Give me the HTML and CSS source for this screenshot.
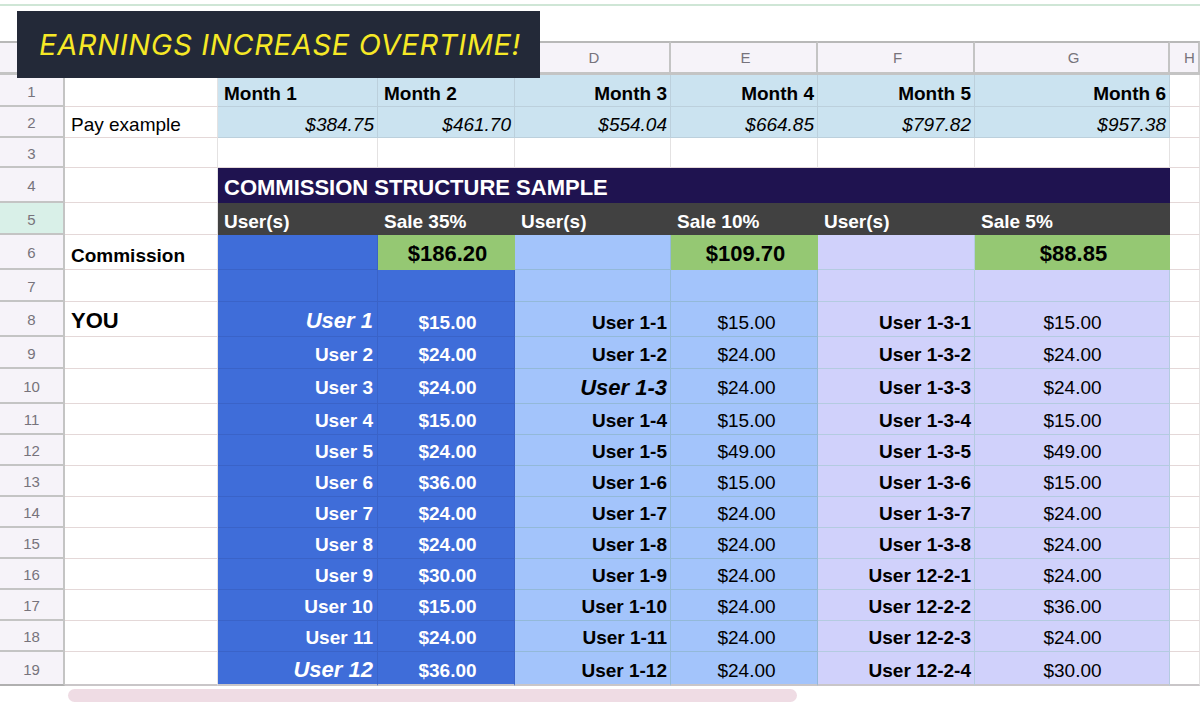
FILE: index.html
```html
<!DOCTYPE html>
<html lang="en">
<head>
<meta charset="utf-8">
<title>Earnings increase overtime</title>
<link rel="stylesheet" href="styles.css">
</head>
<body>
<div class="page">
  <div class="topstrip"></div>
  <div class="banner">EARNINGS INCREASE OVERTIME!</div>
  <table class="sheet">
    <colgroup>
      <col class="c-rh"><col class="c-a"><col class="c-b"><col class="c-c"><col class="c-d"><col class="c-e"><col class="c-f"><col class="c-g"><col class="c-h">
    </colgroup>
    <tr class="h34 colhead"><th class="rh"></th><th></th><th></th><th></th><th>D</th><th>E</th><th>F</th><th>G</th><th class="hcol">H</th></tr>
    <tr class="h32 low"><th class="rh">1</th><td></td><td class="pale b">Month 1</td><td class="pale b">Month 2</td><td class="pale b r">Month 3</td><td class="pale b r">Month 4</td><td class="pale b r">Month 5</td><td class="pale b r">Month 6</td><td></td></tr>
    <tr class="h31 low"><th class="rh">2</th><td>Pay example</td><td class="pale r i">$384.75</td><td class="pale r i">$461.70</td><td class="pale r i">$554.04</td><td class="pale r i">$664.85</td><td class="pale r i">$797.82</td><td class="pale r i">$957.38</td><td></td></tr>
    <tr class="h30"><th class="rh">3</th><td></td><td></td><td></td><td></td><td></td><td></td><td></td><td></td></tr>
    <tr class="h35"><th class="rh">4</th><td></td><td class="navy" colspan="6">COMMISSION STRUCTURE SAMPLE</td><td></td></tr>
    <tr class="h32"><th class="rh sel">5</th><td></td><td class="grey">User(s)</td><td class="grey">Sale 35%</td><td class="grey">User(s)</td><td class="grey">Sale 10%</td><td class="grey">User(s)</td><td class="grey">Sale 5%</td><td></td></tr>
    <tr class="h35"><th class="rh">6</th><td class="b label">Commission</td><td class="blue"></td><td class="green">$186.20</td><td class="sky"></td><td class="green">$109.70</td><td class="lav"></td><td class="green">$88.85</td><td></td></tr>
    <tr class="h32"><th class="rh">7</th><td></td><td class="blue"></td><td class="blue"></td><td class="sky"></td><td class="sky"></td><td class="lav"></td><td class="lav"></td><td></td></tr>
    <tr class="h35 low2"><th class="rh">8</th><td class="you">YOU</td><td class="blue u big">User 1</td><td class="blue amt">$15.00</td><td class="sky u">User 1-1</td><td class="sky m">$15.00</td><td class="lav u">User 1-3-1</td><td class="lav m">$15.00</td><td></td></tr>
    <tr class="h32"><th class="rh">9</th><td></td><td class="blue u">User 2</td><td class="blue amt">$24.00</td><td class="sky u">User 1-2</td><td class="sky m">$24.00</td><td class="lav u">User 1-3-2</td><td class="lav m">$24.00</td><td></td></tr>
    <tr class="h35"><th class="rh">10</th><td></td><td class="blue u">User 3</td><td class="blue amt">$24.00</td><td class="sky u big">User 1-3</td><td class="sky m">$24.00</td><td class="lav u">User 1-3-3</td><td class="lav m">$24.00</td><td></td></tr>
    <tr class="h31"><th class="rh">11</th><td></td><td class="blue u">User 4</td><td class="blue amt">$15.00</td><td class="sky u">User 1-4</td><td class="sky m">$15.00</td><td class="lav u">User 1-3-4</td><td class="lav m">$15.00</td><td></td></tr>
    <tr class="h31"><th class="rh">12</th><td></td><td class="blue u">User 5</td><td class="blue amt">$24.00</td><td class="sky u">User 1-5</td><td class="sky m">$49.00</td><td class="lav u">User 1-3-5</td><td class="lav m">$49.00</td><td></td></tr>
    <tr class="h31"><th class="rh">13</th><td></td><td class="blue u">User 6</td><td class="blue amt">$36.00</td><td class="sky u">User 1-6</td><td class="sky m">$15.00</td><td class="lav u">User 1-3-6</td><td class="lav m">$15.00</td><td></td></tr>
    <tr class="h31"><th class="rh">14</th><td></td><td class="blue u">User 7</td><td class="blue amt">$24.00</td><td class="sky u">User 1-7</td><td class="sky m">$24.00</td><td class="lav u">User 1-3-7</td><td class="lav m">$24.00</td><td></td></tr>
    <tr class="h31"><th class="rh">15</th><td></td><td class="blue u">User 8</td><td class="blue amt">$24.00</td><td class="sky u">User 1-8</td><td class="sky m">$24.00</td><td class="lav u">User 1-3-8</td><td class="lav m">$24.00</td><td></td></tr>
    <tr class="h31"><th class="rh">16</th><td></td><td class="blue u">User 9</td><td class="blue amt">$30.00</td><td class="sky u">User 1-9</td><td class="sky m">$24.00</td><td class="lav u">User 12-2-1</td><td class="lav m">$24.00</td><td></td></tr>
    <tr class="h31"><th class="rh">17</th><td></td><td class="blue u">User 10</td><td class="blue amt">$15.00</td><td class="sky u">User 1-10</td><td class="sky m">$24.00</td><td class="lav u">User 12-2-2</td><td class="lav m">$36.00</td><td></td></tr>
    <tr class="h31"><th class="rh">18</th><td></td><td class="blue u">User 11</td><td class="blue amt">$24.00</td><td class="sky u">User 1-11</td><td class="sky m">$24.00</td><td class="lav u">User 12-2-3</td><td class="lav m">$24.00</td><td></td></tr>
    <tr class="h34 last"><th class="rh">19</th><td></td><td class="blue u big">User 12</td><td class="blue amt">$36.00</td><td class="sky u">User 1-12</td><td class="sky m">$24.00</td><td class="lav u">User 12-2-4</td><td class="lav m">$30.00</td><td></td></tr>
  </table>
  <div class="scrollbar"><div class="thumb"></div></div>
</div>
</body>
</html>
```
FILE: styles.css
```css
* { box-sizing: border-box; }
html, body { margin: 0; padding: 0; background: #fff; }
.page {
  position: relative;
  width: 1200px;
  height: 703px;
  overflow: hidden;
  font-family: "Liberation Sans", Arial, sans-serif;
  color: #000;
}
.topstrip {
  height: 37px;
  margin-top: 4px;
  background: #fff;
  border-top: 2px solid #cfe6d6;
}
.banner {
  position: absolute;
  left: 17px;
  top: 11px;
  width: 523px;
  height: 67px;
  padding: 19px 0 0 22px;
  background: #232938;
  color: #f6e826;
  font-family: Inter, "Liberation Sans", sans-serif;
  font-style: italic;
  font-weight: 400;
  font-size: 29px;
  line-height: 30px;
  letter-spacing: 0.7px;
  white-space: nowrap;
}
.sheet {
  table-layout: fixed;
  border-collapse: separate;
  border-spacing: 0;
  width: 1200px;
  font-size: 19px;
  line-height: 22px;
}
.c-rh { width: 65px; }
.c-a { width: 153px; }
.c-b { width: 160px; }
.c-c { width: 137px; }
.c-d { width: 156px; }
.c-e { width: 147px; }
.c-f { width: 157px; }
.c-g { width: 195px; }
.c-h { width: 30px; }
.h30 { height: 30px; }
.h31 { height: 31px; }
.h32 { height: 32px; }
.h34 { height: 34px; }
.h35 { height: 35px; }
td, th {
  padding: 4px 3px 0 6px;
  border-right: 1px solid #e4e2e2;
  border-bottom: 1px solid #e4d8d8;
  overflow: hidden;
  white-space: nowrap;
  font-weight: 400;
  vertical-align: middle;
}
.low td { padding-top: 6px; }
.low2 td { padding-top: 8px; }
th.rh, .colhead th {
  padding: 3px 0 0;
  background: #f6f3f9;
  color: #77737c;
  font-size: 15px;
  text-align: center;
  border-right: 2px solid #c4c4c4;
  border-bottom: 2px solid #c4c4c4;
}
.colhead th {
  padding: 0 0 0 4px;
  border-top: 2px solid #b8b8b8;
  border-bottom: 3px solid #c4c4c4;
}
.colhead th.hcol { padding-left: 11px; }
th.sel { background: #d9f0e8; }
.pale { background: #cbe3f0; border-color: #bcd0dc; }
.b { font-weight: 700; }
.r { text-align: right; }
.i { font-style: italic; }
.label { padding-top: 8px; }
.navy {
  background: #1f1350;
  color: #fff;
  font-size: 22px;
  font-weight: 700;
  border-color: #1f1350;
  padding-top: 6px;
}
.grey {
  background: #414141;
  color: #fff;
  font-weight: 700;
  border-color: #414141;
  padding-top: 6px;
}
.blue { background: #3f6dd9; border-color: #3a63c8; color: #fff; }
.sky { background: #a3c4fb; border-color: #93b9d8; }
.lav { background: #d0d1fb; border-color: #b4cbe0; }
.green {
  background: #95c873;
  font-size: 22px;
  font-weight: 700;
  text-align: center;
  border-color: #95c873;
}
.u { font-weight: 700; text-align: right; padding-right: 4px; }
.sky.u, .lav.u { padding-right: 3px; }
.sky.m { padding-left: 8px; }
.lav.m { padding-left: 4px; }
.big { font-style: italic; font-size: 22px; }
.amt { font-weight: 700; text-align: center; }
.m { text-align: center; }
.low2 .you { font-size: 22px; font-weight: 700; padding-top: 4px; padding-bottom: 0; }
.low2 .big { padding-top: 4px; }
.last td { border-bottom: 2px solid #c9c6c8; padding-top: 6px; }
.last .big { padding-top: 4px; }
.last th.rh { border-bottom-color: #b0b0b0; }
.scrollbar {
  height: 17px;
  padding: 3px 403px 1px 68px;
}
.thumb {
  height: 13px;
  background: #efdce4;
  border-radius: 7px;
}
```
